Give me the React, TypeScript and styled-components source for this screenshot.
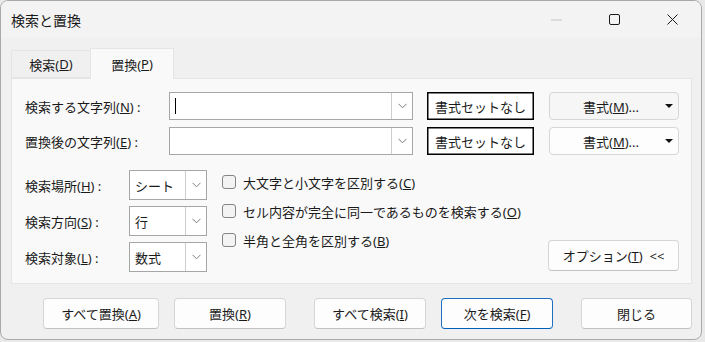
import styled, { createGlobalStyle } from "styled-components";

const GlobalStyle = createGlobalStyle`
  * { box-sizing: border-box; }
  body {
    margin: 0;
    background: #e9e9e9;
    font-family: "Noto Sans", "Noto Sans CJK JP", sans-serif;
    font-size: 13px;
    color: #1a1a1a;
  }
`;

const Chevron = () => (
  <svg width="9" height="6" viewBox="0 0 9 6">
    <polyline points="0.5,0.8 4.5,4.8 8.5,0.8" fill="none" stroke="#7a7a7a" strokeWidth="1" />
  </svg>
);

const Triangle = () => (
  <svg width="8" height="4" viewBox="0 0 8 4">
    <polygon points="0,0 8,0 4,4" fill="#111" />
  </svg>
);

const App = () => {
  return (
    <>
      <GlobalStyle />
      <Window>
        <TitleBar>
          <TitleText>検索と置換</TitleText>
          <WindowControls>
            <ControlButton>
              <svg width="11" height="2" viewBox="0 0 11 2">
                <line x1="0" y1="1" x2="11" y2="1" stroke="#c4c4c4" strokeWidth="1" />
              </svg>
            </ControlButton>
            <ControlButton>
              <svg width="11" height="11" viewBox="0 0 11 11">
                <rect x="0.5" y="0.5" width="10" height="10" rx="1.5" fill="none" stroke="#1a1a1a" strokeWidth="1" />
              </svg>
            </ControlButton>
            <ControlButton>
              <svg width="11" height="11" viewBox="0 0 11 11">
                <path d="M0.5 0.5 L10.5 10.5 M10.5 0.5 L0.5 10.5" stroke="#1a1a1a" strokeWidth="1" />
              </svg>
            </ControlButton>
          </WindowControls>
        </TitleBar>

        <Body>
          <TabList>
            <Tab $width={79}>
              検索(<u>D</u>)
            </Tab>
            <Tab $active $width={84}>
              置換(<u>P</u>)
            </Tab>
          </TabList>

          <Panel>
            <FieldRow>
              <FieldLabel $width={144}>
                検索する文字列(<u>N</u>) :
              </FieldLabel>
              <ComboBox $width={244}>
                <ComboText>
                  <Caret />
                </ComboText>
                <DropButton>
                  <Chevron />
                </DropButton>
              </ComboBox>
              <ResetButton>書式セットなし</ResetButton>
              <FormatButton $hover>
                <span>
                  書式(<u>M</u>)...
                </span>
                <Triangle />
              </FormatButton>
            </FieldRow>
            <FieldRow>
              <FieldLabel $width={144}>
                置換後の文字列(<u>E</u>) :
              </FieldLabel>
              <ComboBox $width={244}>
                <ComboText />
                <DropButton>
                  <Chevron />
                </DropButton>
              </ComboBox>
              <ResetButton>書式セットなし</ResetButton>
              <FormatButton>
                <span>
                  書式(<u>M</u>)...
                </span>
                <Triangle />
              </FormatButton>
            </FieldRow>

            <OptionsSection>
              <SelectColumn>
                {[
                  ["検索場所", "H", "シート"],
                  ["検索方向", "S", "行"],
                  ["検索対象", "L", "数式"],
                ].map(([label, key, value]) => (
                  <SelectRow key={key}>
                    <FieldLabel $width={104}>
                      {label}(<u>{key}</u>) :
                    </FieldLabel>
                    <ComboBox $width={78} $height={30}>
                      <ComboText>{value}</ComboText>
                      <DropButton>
                        <Chevron />
                      </DropButton>
                    </ComboBox>
                  </SelectRow>
                ))}
              </SelectColumn>

              <CheckList>
                <CheckRow>
                  <CheckBox />
                  <span>
                    大文字と小文字を区別する(<u>C</u>)
                  </span>
                </CheckRow>
                <CheckRow>
                  <CheckBox />
                  <span>
                    セル内容が完全に同一であるものを検索する(<u>O</u>)
                  </span>
                </CheckRow>
                <CheckRow>
                  <CheckBox />
                  <span>
                    半角と全角を区別する(<u>B</u>)
                  </span>
                </CheckRow>
              </CheckList>

              <OptionsButton>
                オプション(<u>T</u>)&nbsp;&nbsp;&lt;&lt;
              </OptionsButton>
            </OptionsSection>
          </Panel>

          <Footer>
            <DialogButton $width={116}>
              すべて置換(<u>A</u>)
            </DialogButton>
            <DialogButton>
              置換(<u>R</u>)
            </DialogButton>
            <DialogButton $gap={28}>
              すべて検索(<u>I</u>)
            </DialogButton>
            <DialogButton $primary>
              次を検索(<u>F</u>)
            </DialogButton>
            <DialogButton $gap={28} $width={111}>
              閉じる
            </DialogButton>
          </Footer>
        </Body>
      </Window>
    </>
  );
};

export default App;

const Window = styled.div`
  display: flex;
  flex-direction: column;
  width: 702px;
  height: 340px;
  background: #f0f0f0;
  border: 1px solid #a9a9a9;
  border-radius: 8px;
  overflow: hidden;
`;

const TitleBar = styled.div`
  display: flex;
  align-items: center;
  height: 37px;
  padding-left: 10px;
  background: #f3f3f3;
`;

const TitleText = styled.div`
  font-size: 14px;
  color: #1a1a1a;
`;

const WindowControls = styled.div`
  display: flex;
  margin-left: auto;
  height: 100%;
`;

const ControlButton = styled.div`
  display: flex;
  align-items: center;
  justify-content: center;
  width: 58px;
  height: 100%;
`;

const Body = styled.div`
  display: flex;
  flex-direction: column;
  padding: 10px 9px 0 10px;
`;

const TabList = styled.div`
  display: flex;
  align-items: flex-end;
  height: 30px;
`;

const Tab = styled.div<{ $active?: boolean; $width: number }>`
  display: flex;
  align-items: center;
  justify-content: center;
  width: ${(p) => p.$width}px;
  height: ${(p) => (p.$active ? "31px" : "28px")};
  margin-bottom: ${(p) => (p.$active ? "-1px" : "0")};
  background: ${(p) => (p.$active ? "#f9f9f9" : "#f0f0f0")};
  border: 1px solid #e5e5e5;
  border-bottom: ${(p) => (p.$active ? "none" : "1px solid #e5e5e5")};
  border-right: ${(p) => (p.$active ? "1px solid #e5e5e5" : "none")};
  position: relative;
  z-index: ${(p) => (p.$active ? 1 : 0)};
`;

const Panel = styled.div`
  display: flex;
  flex-direction: column;
  gap: 7px;
  height: 206px;
  padding: 13px 12px 0 13px;
  background: #f9f9f9;
  border: 1px solid #e5e5e5;
`;

const FieldRow = styled.div`
  display: flex;
  align-items: center;
  height: 28px;
`;

const FieldLabel = styled.div<{ $width: number }>`
  width: ${(p) => p.$width}px;
  flex-shrink: 0;
  white-space: nowrap;
`;

const ComboBox = styled.div<{ $width: number; $height?: number }>`
  display: flex;
  width: ${(p) => p.$width}px;
  height: ${(p) => p.$height ?? 28}px;
  background: #ffffff;
  border: 1px solid #a6a6a6;
`;

const ComboText = styled.div`
  display: flex;
  align-items: center;
  flex: 1;
  padding-left: 5px;
`;

const Caret = styled.div`
  width: 1px;
  height: 16px;
  background: #000;
`;

const DropButton = styled.div`
  display: flex;
  align-items: center;
  justify-content: center;
  width: 21px;
  border-left: 1px solid #cdcdcd;
`;

const ResetButton = styled.div`
  display: flex;
  align-items: center;
  justify-content: center;
  width: 107px;
  height: 28px;
  margin-left: 14px;
  background: #ffffff;
  border: 1px solid #000;
  box-shadow: inset 0 0 0 0.5px #000;
  white-space: nowrap;
`;

const FormatButton = styled.div<{ $hover?: boolean }>`
  display: flex;
  align-items: center;
  width: 130px;
  height: 28px;
  margin-left: 15px;
  padding: 0 5px 0 33px;
  background: ${(p) => (p.$hover ? "#f6f6f6" : "#fdfdfd")};
  border: 1px solid #d6d6d6;
  border-radius: 4px;

  svg {
    margin-left: auto;
  }
`;

const OptionsSection = styled.div`
  display: flex;
  margin-top: 8px;
`;

const SelectColumn = styled.div`
  display: flex;
  flex-direction: column;
  gap: 6px;
`;

const SelectRow = styled.div`
  display: flex;
  align-items: center;
`;

const CheckList = styled.div`
  display: flex;
  flex-direction: column;
  gap: 5px;
  margin-left: 15px;
`;

const CheckRow = styled.div`
  display: flex;
  align-items: center;
  gap: 7px;
  height: 24px;
  white-space: nowrap;
`;

const CheckBox = styled.div`
  width: 14px;
  height: 14px;
  background: #f3f3f3;
  border: 1px solid #858585;
  border-radius: 3px;
`;

const OptionsButton = styled.div`
  display: flex;
  align-items: center;
  justify-content: center;
  align-self: flex-end;
  width: 131px;
  height: 31px;
  margin-left: auto;
  margin-bottom: 1px;
  background: #fdfdfd;
  border: 1px solid #d6d6d6;
  border-bottom-color: #c2c2c2;
  border-radius: 4px;
  white-space: nowrap;
`;

const Footer = styled.div`
  display: flex;
  margin-top: 14px;
  padding-left: 32px;
`;

const DialogButton = styled.div<{ $primary?: boolean; $width?: number; $gap?: number }>`
  display: flex;
  align-items: center;
  justify-content: center;
  width: ${(p) => p.$width ?? 112}px;
  height: 31px;
  margin-left: ${(p) => p.$gap ?? 15}px;
  background: #fdfdfd;
  border: 1px solid ${(p) => (p.$primary ? "#1f6fc0" : "#d6d6d6")};
  border-bottom-color: ${(p) => (p.$primary ? "#005fb8" : "#c2c2c2")};
  border-radius: 4px;

  &:first-child {
    margin-left: 0;
  }
`;
